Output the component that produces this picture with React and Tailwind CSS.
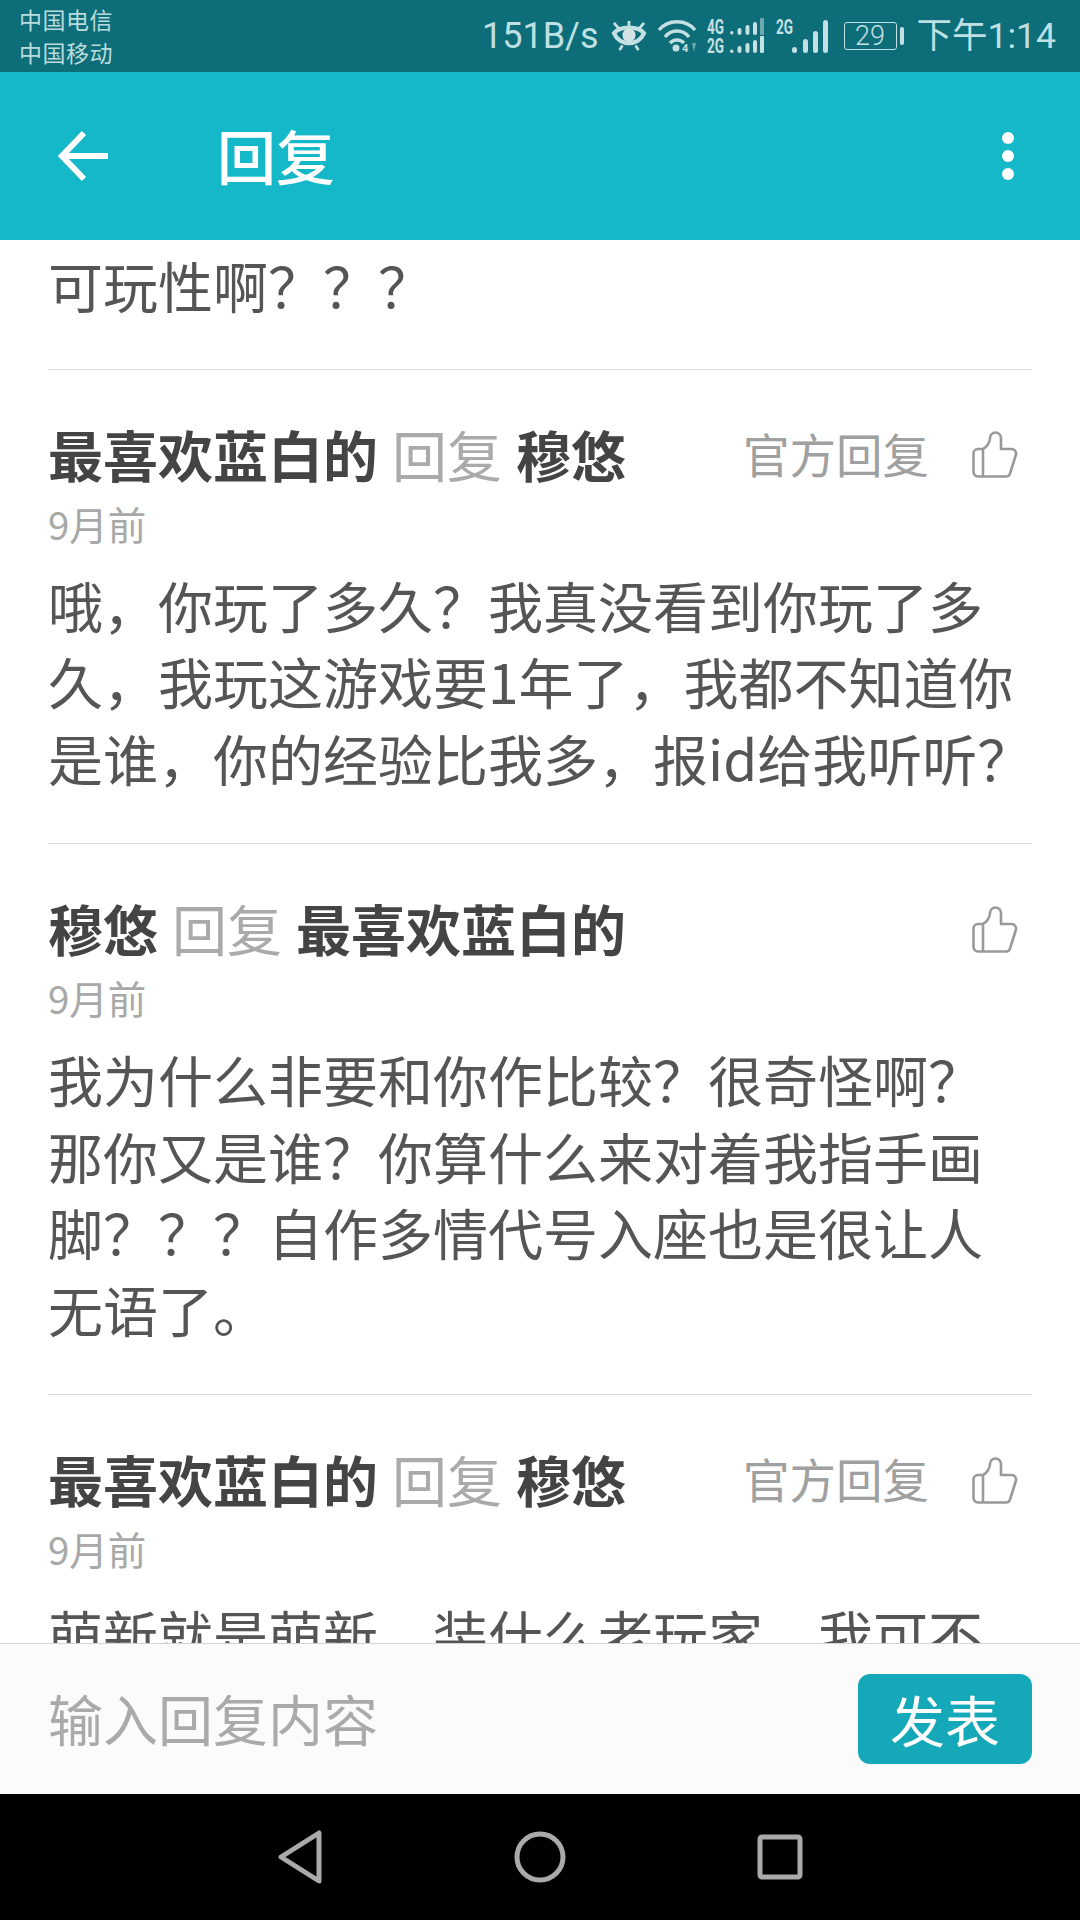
import React from "react";

const Thumb = () => (
  <svg width="46" height="47" viewBox="0 0 46 47" fill="none" stroke="#999999" strokeWidth="2.6" strokeLinejoin="round" className="ml-[43px] mr-[14px] shrink-0 mt-[4px]">
    <path d="M11 18 H6 a4.500 4.500 0 0 0 -4.500 4.500 V41 a4.500 4.500 0 0 0 4.500 4.500 H34 a4 4 0 0 0 4 -3 L44 23.500 a4.500 4.500 0 0 0 -4.300 -5.500 H29 V7 a5.500 5.500 0 0 0 -11 0 C18 11 15 16 11 18 V45.500" />
  </svg>
);

const Comment = ({ a, b, official, lines, bodyClass = "mt-[23px]" }) => (
  <section className="border-t border-[#dcdcdc] pt-[49px] pb-[48px]">
    <div className="flex items-center h-[68px]">
      <span className="font-bold text-[55px] leading-[68px] text-[#444444]">{a}</span>
      <span className="text-[55px] leading-[68px] text-[#aaaaaa] mx-[14px]">回复</span>
      <span className="font-bold text-[55px] leading-[68px] text-[#444444]">{b}</span>
      <span className="flex-1" />
      {official && <span className="text-[46.500px] leading-[68px] text-[#a0a0a0]">官方回复</span>}
      <Thumb />
    </div>
    <div className="mt-[16px] h-[40px] text-[38.500px] leading-[40px] text-[#a8a8a8]">9月前</div>
    <div className={`${bodyClass} text-[55px] leading-[76.5px] text-[#555555]`}>
      {lines.map((l) => (
        <div key={l} className="whitespace-nowrap">{l}</div>
      ))}
    </div>
  </section>
);

const StatusIcons = () => (
  <>
    <svg width="36" height="32" viewBox="0 0 38 34" className="ml-[12px] shrink-0" fill="none" stroke="#c3e0e3">
      <path d="M3 14 C9 6 29 6 35 14 C29 28 9 28 3 14 Z" strokeWidth="4.500" />
      <circle cx="19" cy="16" r="7" fill="#d5e3e5" stroke="none" />
      <path d="M19 7 V1 M8 9 L3 3 M30 9 L35 3 M12 27 L9 32 M26 27 L29 32" strokeWidth="3" />
    </svg>
    <svg width="40" height="34" viewBox="0 0 40 34" className="ml-[10px] shrink-0" fill="none" stroke="#c3e0e3" strokeWidth="3.500">
      <path d="M2 11 C11 0 29 0 38 11" />
      <path d="M8 18 C14 10 26 10 32 18" />
      <path d="M13 24 C17 20 23 20 27 24" />
      <circle cx="19" cy="29" r="3.500" fill="#c3e0e3" stroke="none" />
      <text x="25" y="33" fontSize="11" fontWeight="700" fill="#c3e0e3" stroke="none" fontFamily="Roboto, sans-serif">4</text>
      <path d="M35 24 L39 24 L37 33 Z" fill="#6fa9ae" stroke="none" />
    </svg>
    <svg width="58" height="36" viewBox="0 0 58 36" className="ml-[10px] shrink-0" fill="#c3e0e3">
      <text x="0" y="16" fontSize="20" fontWeight="700" fontFamily="Roboto, sans-serif" textLength="17" lengthAdjust="spacingAndGlyphs">4G</text>
      <text x="0" y="35" fontSize="20" fontWeight="700" fontFamily="Roboto, sans-serif" textLength="17" lengthAdjust="spacingAndGlyphs">2G</text>
      <rect x="23" y="13" width="3.500" height="3.500" rx="1.700" />
      <rect x="30.500" y="10" width="4" height="7" rx="2" />
      <rect x="38.500" y="7" width="4" height="10" rx="2" />
      <rect x="46" y="4" width="4" height="13" rx="2" />
      <rect x="53" y="0" width="4" height="17" rx="1" fill="#6fa9ae" />
      <rect x="23" y="31.500" width="3.500" height="3.500" rx="1.700" />
      <rect x="30.500" y="28" width="4" height="7" rx="2" />
      <rect x="38.500" y="25" width="4" height="10" rx="2" />
      <rect x="46" y="22" width="4" height="13" rx="2" />
      <rect x="53" y="18" width="4" height="17" rx="1" />
    </svg>
    <svg width="53" height="35" viewBox="0 0 53 35" className="ml-[11px] shrink-0" fill="#c3e0e3">
      <text x="0" y="15" fontSize="20" fontWeight="700" fontFamily="Roboto, sans-serif" textLength="17" lengthAdjust="spacingAndGlyphs">2G</text>
      <rect x="16" y="28" width="5" height="6" rx="2.500" />
      <rect x="27" y="20" width="5" height="14" rx="2.500" />
      <rect x="37" y="12" width="5" height="22" rx="2.500" />
      <rect x="47" y="1" width="5" height="33" rx="2.500" />
    </svg>
    <div className="ml-[15px] flex items-center shrink-0">
      <div className="w-[53px] h-[28px] border-[1.5px] border-[#c3e0e3] rounded-[3px] flex items-center justify-center text-[27px] leading-[27px] font-[Roboto] font-light text-[#c3e0e3]">29</div>
      <div className="ml-[3px] w-[4px] h-[18px] rounded-[2px] bg-[#c3e0e3]" />
    </div>
  </>
);

export default function App() {
  return (
    <div className="w-[1080px] h-[1920px] flex flex-col overflow-hidden bg-white font-['Noto_Sans_CJK_SC','Noto_Sans',sans-serif]">
      <div className="h-[72px] shrink-0 bg-[#0d6d78] flex items-center pl-[19px] pr-[24px] text-[#bfe0e3]">
        <div className="text-[23px] leading-[33px] tracking-[0.500px] text-[#b8dcdc]">
          <div>中国电信</div>
          <div>中国移动</div>
        </div>
        <div className="flex-1" />
        <span className="font-[Roboto] text-[36px] leading-[40px]">151B/s</span>
        <StatusIcons />
        <span className="ml-[13px] text-[35.500px] leading-[40px] font-normal font-['Roboto','Noto_Sans_CJK_SC',sans-serif]">下午1:14</span>
      </div>

      <header className="h-[168px] shrink-0 bg-[#14b8c9] flex items-center text-white">
        <svg width="52" height="52" viewBox="0 0 52 52" fill="none" stroke="#ffffff" strokeWidth="6" className="ml-[58px] shrink-0">
          <path d="M50 26 H6 M26 3 L4 26 L26 49" />
        </svg>
        <h1 className="ml-[107px] mb-[2px] text-[59px] leading-[68px] font-medium">回复</h1>
        <div className="flex-1" />
        <div className="mr-[66px] flex flex-col gap-[6px]">
          <div className="w-[12px] h-[12px] rounded-full bg-white" />
          <div className="w-[12px] h-[12px] rounded-full bg-white" />
          <div className="w-[12px] h-[12px] rounded-full bg-white" />
        </div>
      </header>

      <main className="flex-1 min-h-0 overflow-hidden px-[48px] pt-[6px]">
        <p className="text-[55px] leading-[76.5px] text-[#555555] pb-[46px]">可玩性啊？？？</p>
        <Comment a="最喜欢蓝白的" b="穆悠" official lines={["哦，你玩了多久？我真没看到你玩了多", "久，我玩这游戏要1年了，我都不知道你", "是谁，你的经验比我多，报id给我听听？"]} />
        <Comment a="穆悠" b="最喜欢蓝白的" lines={["我为什么非要和你作比较？很奇怪啊？", "那你又是谁？你算什么来对着我指手画", "脚？？？自作多情代号入座也是很让人", "无语了。"]} />
        <Comment a="最喜欢蓝白的" b="穆悠" official bodyClass="mt-[27px]" lines={["萌新就是萌新，装什么老玩家，我可不"]} />
      </main>

      <div className="h-[151px] shrink-0 border-t border-[#d4d4d4] bg-[#fbfbfb] flex items-center justify-between pl-[48px] pr-[48px]">
        <span className="mb-[4px] text-[55px] leading-[68px] text-[#aaaaaa]">输入回复内容</span>
        <button className="w-[174px] h-[90px] pb-[2px] rounded-[12px] bg-[#14a8b8] text-white text-[55px] leading-[68px]">发表</button>
      </div>

      <nav className="h-[126px] shrink-0 bg-black flex items-center">
        <svg width="46" height="54" viewBox="0 0 46 54" fill="none" stroke="#aaaaaa" strokeWidth="5" strokeLinejoin="round" className="ml-[277px] shrink-0">
          <path d="M42 3 V51 L4 27 Z" />
        </svg>
        <svg width="52" height="52" viewBox="0 0 52 52" fill="none" stroke="#aaaaaa" strokeWidth="5" className="ml-[191px] shrink-0">
          <circle cx="26" cy="26" r="23" />
        </svg>
        <svg width="46" height="46" viewBox="0 0 46 46" fill="none" stroke="#aaaaaa" strokeWidth="5" className="ml-[191px] shrink-0">
          <rect x="3" y="3" width="40" height="40" rx="2" />
        </svg>
      </nav>
    </div>
  );
}
